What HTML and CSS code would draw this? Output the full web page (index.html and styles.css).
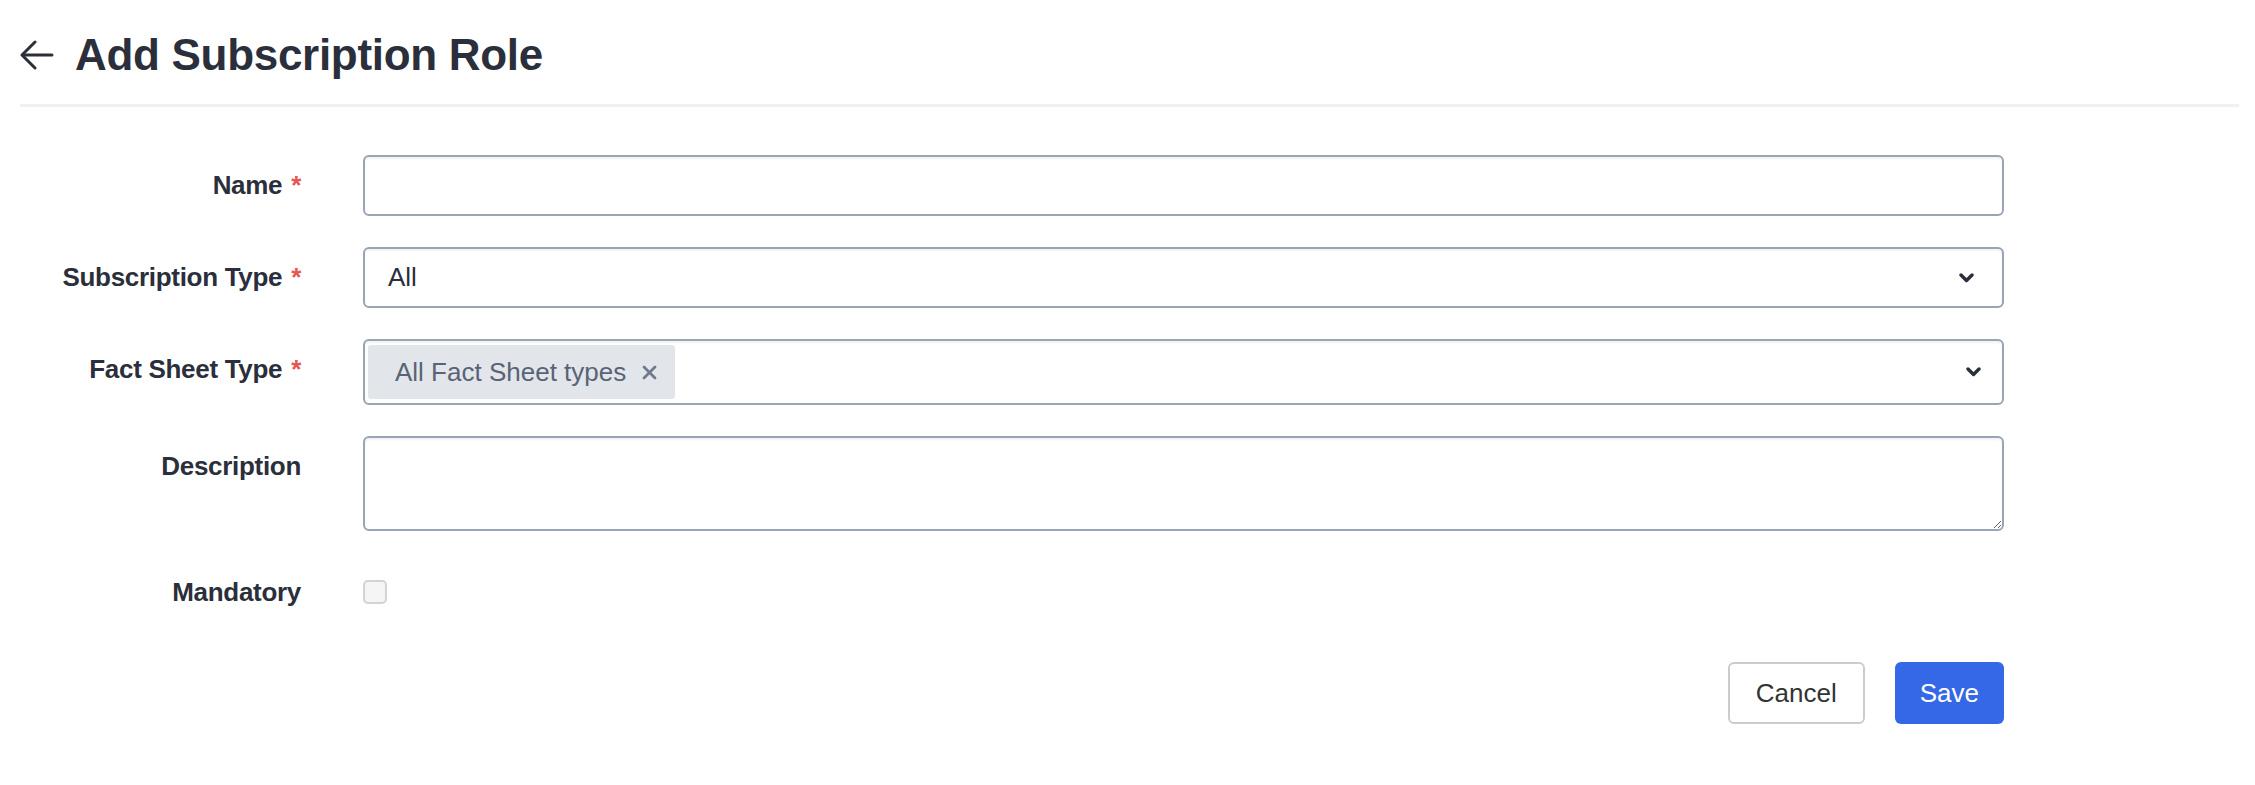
FILE: index.html
```html
<!DOCTYPE html>
<html lang="en">
<head>
  <meta charset="UTF-8" />
  <title>Add Subscription Role</title>
  <link rel="stylesheet" href="styles.css">
</head>
<body>
  <div class="page">
    <div class="header">
      <button class="back" aria-label="Back">
        <svg width="34" height="30" viewBox="0 0 34 30" fill="none" stroke="#2b2f3b" stroke-width="3" stroke-linecap="round" stroke-linejoin="round">
          <path d="M32 15H3"/>
          <path d="M15 2L2 15l13 13"/>
        </svg>
      </button>
      <h1 class="title">Add Subscription Role</h1>
    </div>

    <form class="form">
      <label class="label">Name <span class="req">*</span></label>
      <input class="control input" type="text">

      <label class="label">Subscription Type <span class="req">*</span></label>
      <div class="control select">
        <span class="value">All</span>
        <svg class="chevron" width="15" height="10" viewBox="0 0 15 10" fill="none" stroke="#2b2f3b" stroke-width="3.4" stroke-linecap="round" stroke-linejoin="round">
          <path d="M2 2l5.5 5.5L13 2"/>
        </svg>
      </div>

      <label class="label">Fact Sheet Type <span class="req">*</span></label>
      <div class="control select multi">
        <span class="tag">All Fact Sheet types
          <svg class="tag-x" width="15" height="15" viewBox="0 0 15 15" stroke="#6f7a8f" stroke-width="2.8" stroke-linecap="round">
            <path d="M2 2l11 11M13 2L2 13"/>
          </svg>
        </span>
        <svg class="chevron" width="15" height="10" viewBox="0 0 15 10" fill="none" stroke="#2b2f3b" stroke-width="3.4" stroke-linecap="round" stroke-linejoin="round">
          <path d="M2 2l5.5 5.5L13 2"/>
        </svg>
      </div>

      <label class="label">Description</label>
      <textarea class="control textarea"></textarea>

      <label class="label">Mandatory</label>
      <div class="check-cell">
        <input class="check" type="checkbox" disabled>
      </div>

      <div class="actions">
        <button type="button" class="btn btn-cancel">Cancel</button>
        <button type="button" class="btn btn-save">Save</button>
      </div>
    </form>
  </div>
</body>
</html>
```

FILE: styles.css
```css
* {
  box-sizing: border-box;
  margin: 0;
  padding: 0;
}

body {
  background-color: #fff;
  color: #2b2f3b;
  font-family: 'Liberation Sans', Arial, sans-serif;
  font-size: 26px;
}

.page {
  padding: 0 16px 0 20px;
}

.header {
  display: flex;
  align-items: center;
  gap: 21px;
  height: 70px;
  padding-top: 20px;
  padding-bottom: 14px;
  border-bottom: 3px solid #eef0f3;
  box-sizing: content-box;
}

.back {
  display: flex;
  border: none;
  background: none;
  cursor: pointer;
}

.title {
  font-size: 44px;
  font-weight: bold;
  color: #2b2f3b;
  letter-spacing: -0.3px;
}

.form {
  display: grid;
  grid-template-columns: 281px 1641px;
  column-gap: 62px;
  row-gap: 31px;
  margin-top: 48px;
}

.label {
  text-align: right;
  font-weight: bold;
  line-height: 60px;
  align-self: start;
  white-space: nowrap;
  letter-spacing: -0.3px;
}

.req {
  color: #e5574f;
  margin-left: 2px;
}

.control {
  border: 2px solid #9aa4b7;
  border-radius: 6px;
  background-color: #fff;
  box-shadow: inset 0 2px 2px rgba(0, 0, 0, 0.05);
  font-family: inherit;
  font-size: 26px;
  color: #2b2f3b;
}

.input {
  height: 61px;
  outline: none;
  padding: 0 22px;
}

.select {
  height: 61px;
  display: flex;
  align-items: center;
  justify-content: space-between;
  padding: 0 28px 0 23px;
}

.multi {
  height: 66px;
  padding: 2px 21px 2px 3px;
}

.tag {
  display: flex;
  align-items: center;
  gap: 16px;
  height: 54px;
  padding: 0 18px 0 27px;
  background-color: #e2e5ea;
  border-radius: 3px;
  color: #596377;
}

.textarea {
  height: 95px;
  resize: vertical;
  outline: none;
  padding: 12px 22px;
}

.check-cell {
  display: flex;
  align-items: center;
  height: 60px;
}

.check {
  appearance: none;
  width: 24px;
  height: 24px;
  border: 2px solid #d3d3d3;
  border-radius: 5px;
  background-color: #f5f5f5;
}

.actions {
  grid-column: 2;
  display: flex;
  justify-content: flex-end;
  gap: 30px;
  margin-top: 9px;
}

.btn {
  height: 62px;
  padding: 0 26px;
  border-radius: 6px;
  font-family: inherit;
  font-size: 26px;
  cursor: pointer;
}

.btn-cancel {
  background-color: #fff;
  border: 2px solid #cccccc;
  color: #333;
}

.btn-save {
  background-color: #3468e6;
  border: none;
  color: #fff;
  padding: 0 25px;
}
```
